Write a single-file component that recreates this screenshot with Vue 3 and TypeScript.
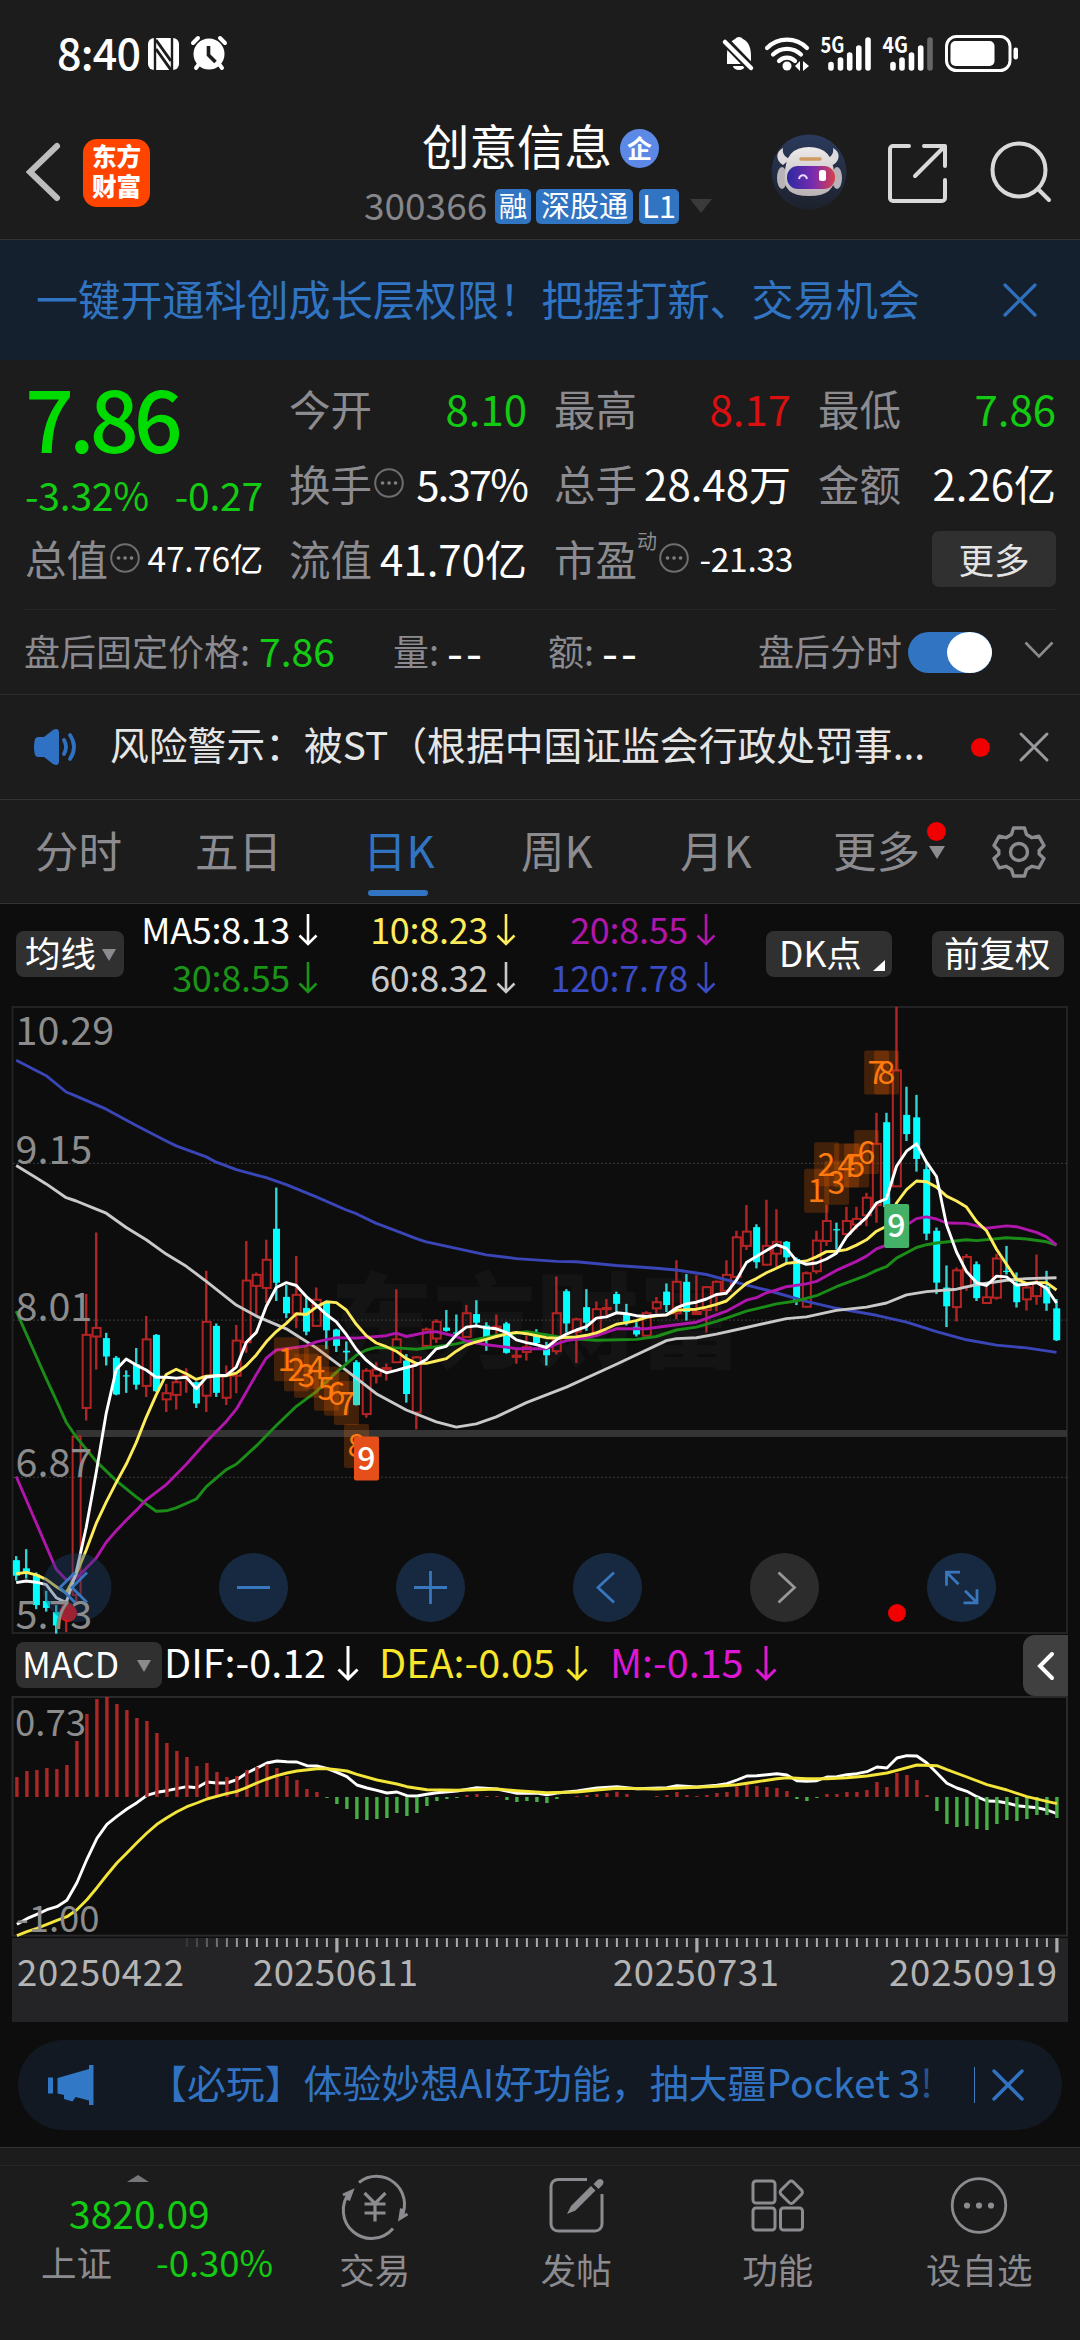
<script setup lang="ts">
type Point = [number, number]
// direction (1 rise, 0 fall), high, body top, body bottom, low
type Candle = [number, number, number, number, number]

const STEP = 10.003
const kx = (i: number): number => 16.2 + i * STEP
const mx = (i: number): number => 16.9 + i * 10
const ky = (v: number): number => v / 2.45
const my = (v: number): number => v / 3

const candles: Candle[] = [
  [0, 1360, 1370, 1408, 1420], [0, 1343, 1390, 1402, 1415], [0, 1400, 1405, 1480, 1490], [0, 1445, 1470, 1487, 1496],
  [0, 1480, 1497, 1530, 1550], [1, 1465, 1478, 1500, 1546], [1, 1067, 1067, 1455, 1480], [1, 718, 818, 997, 1028],
  [1, 567, 801, 822, 903], [0, 813, 826, 871, 893], [0, 870, 874, 964, 966], [0, 905, 917, 920, 960],
  [0, 850, 890, 940, 952], [1, 772, 829, 943, 970], [0, 816, 818, 956, 958], [1, 938, 961, 976, 1007],
  [1, 925, 934, 965, 1001], [1, 900, 918, 922, 960], [0, 932, 934, 986, 997], [1, 661, 786, 967, 1007],
  [0, 790, 796, 960, 970], [1, 893, 917, 972, 990], [1, 794, 832, 918, 961], [1, 588, 685, 836, 862],
  [1, 665, 671, 698, 772], [1, 585, 634, 703, 740], [0, 457, 558, 690, 735], [0, 696, 725, 765, 777],
  [1, 625, 720, 766, 802], [0, 726, 752, 810, 819], [1, 702, 732, 796, 797], [0, 738, 740, 807, 853],
  [0, 803, 805, 845, 860], [0, 834, 857, 861, 885], [0, 880, 885, 990, 991], [1, 900, 906, 1012, 1021],
  [1, 885, 903, 918, 937], [1, 888, 899, 902, 930], [1, 706, 829, 885, 887], [0, 865, 881, 963, 984],
  [1, 870, 873, 1008, 1050], [1, 800, 805, 845, 848], [1, 780, 786, 827, 838], [0, 757, 800, 808, 810],
  [0, 768, 812, 815, 818], [1, 745, 765, 823, 825], [0, 733, 767, 788, 798], [0, 787, 795, 825, 857],
  [1, 768, 798, 801, 820], [0, 786, 790, 862, 864], [1, 850, 869, 872, 889], [1, 820, 848, 860, 881],
  [0, 804, 815, 838, 845], [0, 835, 852, 868, 893], [1, 675, 765, 858, 866], [0, 706, 711, 790, 812],
  [1, 776, 780, 810, 887], [0, 706, 750, 788, 808], [1, 736, 755, 812, 815], [1, 730, 752, 755, 770],
  [0, 712, 718, 742, 765], [0, 742, 767, 786, 795], [0, 787, 798, 817, 822], [1, 760, 765, 820, 822],
  [1, 725, 738, 753, 765], [0, 692, 712, 745, 762], [1, 635, 688, 765, 780], [0, 669, 688, 762, 783],
  [1, 672, 762, 767, 768], [1, 699, 701, 757, 812], [1, 685, 688, 720, 760], [1, 635, 671, 710, 715],
  [1, 563, 579, 676, 680], [1, 500, 565, 600, 610], [0, 547, 554, 640, 655], [1, 487, 600, 646, 648],
  [1, 510, 590, 619, 652], [0, 588, 590, 628, 640], [0, 628, 632, 735, 745], [1, 663, 667, 749, 751],
  [1, 563, 587, 662, 668], [1, 500, 539, 588, 600], [0, 543, 559, 562, 609], [1, 504, 539, 571, 573],
  [1, 504, 534, 548, 560], [1, 470, 482, 525, 552], [1, 274, 350, 500, 543], [0, 274, 297, 505, 510],
  [1, 14, 170, 454, 456], [0, 210, 279, 326, 343], [0, 230, 285, 387, 418], [0, 395, 412, 570, 586],
  [0, 555, 563, 690, 718], [0, 648, 702, 748, 799], [1, 653, 660, 750, 785], [1, 620, 627, 700, 710],
  [0, 638, 645, 728, 735], [1, 700, 726, 740, 742], [1, 620, 631, 727, 732], [0, 600, 661, 664, 670],
  [0, 665, 692, 738, 751], [1, 695, 702, 731, 758], [1, 621, 692, 723, 744], [0, 661, 700, 741, 759],
  [0, 730, 753, 831, 833],
]

const seq = (v: number[]): Point[] => v.map((y, i): Point => [i, y])
const path = (pts: Point[], x: (n: number) => number, y: (n: number) => number): string =>
  pts.map(([a, b]) => `${x(a).toFixed(1)},${y(b).toFixed(1)}`).join(' ')

const ma5 = seq([
  1425, 1421, 1424, 1430, 1462, 1474, 1400, 1290, 1155, 1010, 903, 877, 892, 904, 922, 922, 924, 922, 950, 922, 918, 917,
  897, 836, 812, 748, 702, 690, 697, 724, 745, 768, 786, 817, 853, 880, 900, 911, 905, 898, 892, 878, 852, 846, 818, 799,
  796, 801, 803, 812, 830, 837, 842, 849, 830, 816, 806, 798, 777, 774, 764, 766, 771, 773, 770, 769, 752, 742, 738, 730,
  719, 716, 684, 641, 626, 611, 597, 606, 636, 645, 642, 632, 618, 578, 552, 530, 495, 484, 405, 368, 350, 395, 430, 548,
  615, 663, 690, 697, 674, 676, 696, 694, 690, 704, 740,
])
const ma10 = seq([
  1403, 1400, 1406, 1417, 1435, 1450, 1405, 1345, 1280, 1228, 1180, 1135, 1082, 1020, 965, 915, 902, 913, 927, 919, 918,
  918, 912, 893, 867, 835, 810, 790, 766, 768, 750, 737, 739, 757, 792, 820, 838, 847, 858, 876, 888, 888, 882, 876, 858,
  843, 835, 829, 822, 816, 812, 815, 820, 825, 826, 824, 823, 819, 813, 803, 792, 788, 783, 775, 771, 769, 758, 756, 755,
  750, 743, 735, 713, 692, 680, 666, 655, 643, 640, 637, 627, 614, 613, 609, 598, 585, 564, 552, 495, 462, 441, 443, 456,
  478, 490, 505, 540, 563, 608, 645, 682, 692, 690, 690, 708,
])
const ma20: Point[] = [
  [0, 1165], [4, 1392], [5, 1418], [6, 1415], [7, 1390], [8, 1365], [9, 1326], [10, 1298], [11, 1272], [12, 1248],
  [13, 1222], [15, 1185], [17, 1135], [19, 1080], [21, 1030], [22, 1000], [23, 958], [24, 915], [25, 875], [26, 855],
  [27, 852], [29, 845], [30, 835], [32, 825], [34, 826], [37, 820], [38, 814], [39, 822], [40, 817], [41, 812],
  [42, 810], [44, 822], [45, 833], [47, 842], [49, 848], [50, 852], [53, 852], [54, 840], [55, 832], [57, 825],
  [58, 820], [60, 803], [63, 803], [66, 793], [68, 787], [71, 760], [73, 733], [74, 727], [75, 715], [76, 708],
  [77, 700], [79, 693], [80, 687], [82, 660], [84, 638], [85, 625], [86, 607], [87, 598], [88, 565], [90, 533],
  [91, 529], [92, 534], [93, 544], [95, 545], [97, 557], [99, 551], [100, 553], [102, 567], [103, 578], [104, 598],
]
const ma30: Point[] = [
  [0, 760], [1, 815], [2, 870], [3, 925], [4, 978], [5, 1032], [6, 1068], [8, 1128], [10, 1175], [12, 1215], [14, 1250],
  [15, 1249], [16, 1242], [18, 1220], [19, 1190], [21, 1148], [22, 1135], [24, 1090], [26, 1040], [28, 993], [30, 957],
  [32, 910], [34, 868], [35, 855], [36, 849], [38, 850], [40, 853], [42, 847], [44, 840], [46, 829], [48, 819],
  [50, 814], [51, 810], [52, 814], [54, 822], [56, 828], [58, 831], [62, 829], [64, 822], [66, 806], [68, 799],
  [70, 785], [71, 777], [73, 760], [76, 742], [78, 735], [80, 722], [82, 700], [85, 672], [86, 660], [87, 651],
  [88, 630], [90, 604], [91, 597], [92, 593], [95, 585], [96, 587], [99, 580], [101, 583], [103, 590], [104, 598],
]
const ma60: Point[] = [
  [0, 403], [2, 433], [3, 448], [5, 482], [6, 490], [8, 510], [9, 520], [11, 555], [13, 585], [15, 620], [17, 650],
  [19, 687], [22, 745], [24, 772], [27, 803], [30, 850], [33, 905], [34, 924], [36, 962], [39, 1002], [42, 1031],
  [44, 1044], [46, 1036], [48, 1019], [51, 984], [55, 946], [60, 890], [65, 832], [66, 827], [68, 825], [70, 816],
  [73, 800], [77, 778], [79, 774], [82, 758], [85, 750], [87, 740], [89, 720], [91, 712], [94, 706], [96, 695],
  [99, 684], [101, 680], [104, 678],
]
const ma120: Point[] = [
  [0, 145], [3, 183], [5, 223], [6, 233], [9, 265], [12, 305], [15, 343], [16, 355], [19, 382], [20, 395], [22, 413],
  [25, 433], [27, 450], [30, 480], [33, 512], [34, 521], [36, 545], [38, 563], [40, 582], [41, 590], [44, 606],
  [47, 622], [50, 631], [54, 638], [56, 639], [60, 648], [64, 655], [66, 659], [69, 670], [71, 683], [75, 708],
  [79, 736], [82, 753], [86, 770], [89, 787], [92, 810], [95, 830], [98, 843], [101, 850], [104, 861],
]
const averages: { color: string; pts: string }[] = [
  { color: '#3a46b8', pts: path(ma120, kx, ky) },
  { color: '#c9c9c9', pts: path(ma60, kx, ky) },
  { color: '#1a8c17', pts: path(ma30, kx, ky) },
  { color: '#b015ac', pts: path(ma20, kx, ky) },
  { color: '#ffec5c', pts: path(ma10, kx, ky) },
  { color: '#ffffff', pts: path(ma5, kx, ky) },
]

const marks: { i: number; y: number; t: string }[] = [
  { i: 27, y: 878, t: '1' }, { i: 28, y: 902, t: '2' }, { i: 29, y: 918, t: '3' }, { i: 30, y: 897, t: '4' },
  { i: 31, y: 950, t: '5' }, { i: 32, y: 962, t: '6' }, { i: 33, y: 985, t: '7' }, { i: 34, y: 1090, t: '8' },
  { i: 80, y: 465, t: '1' }, { i: 81, y: 400, t: '2' }, { i: 82, y: 445, t: '3' }, { i: 83, y: 403, t: '4' },
  { i: 84, y: 403, t: '5' }, { i: 85, y: 370, t: '6' }, { i: 86, y: 175, t: '7' }, { i: 87, y: 175, t: '8' },
]
const nines: { i: number; y: number; c: string }[] = [
  { i: 35, y: 1121, c: '#e5501a' },
  { i: 88, y: 551, c: '#43b268' },
]
const priceLabels: { y: number; t: string }[] = [
  { y: 43.7, t: '10.29' }, { y: 163, t: '9.15' }, { y: 320, t: '8.01' }, { y: 476, t: '6.87' }, { y: 628, t: '5.73' },
]

const ZERO = 498
const bars: number[] = [
  438, 420, 417, 411, 414, 402, 330, 249, 204, 198, 219, 237, 261, 270, 306, 336, 360, 378, 405, 396, 423, 438, 435, 417,
  408, 400, 411, 435, 447, 474, 483, 501, 519, 534, 564, 567, 564, 561, 546, 555, 546, 525, 510, 504, 501, 492, 489, 495,
  495, 507, 513, 510, 513, 516, 504, 498, 495, 492, 489, 486, 482, 489, 498, 498, 495, 492, 483, 492, 495, 492, 486, 483,
  467, 460, 465, 468, 471, 480, 504, 510, 501, 489, 489, 483, 483, 477, 453, 468, 426, 432, 447, 492, 540, 579, 588, 585,
  594, 597, 579, 567, 570, 564, 552, 552, 561,
]
const dif: Point[] = [
  [0, 880], [1, 863], [2, 850], [3, 836], [4, 827], [5, 808], [6, 755], [7, 685], [8, 622], [9, 580], [10, 556],
  [11, 534], [12, 515], [13, 493], [14, 484], [15, 479], [16, 473], [17, 467], [18, 470], [19, 453], [20, 456],
  [21, 456], [22, 446], [23, 426], [24, 411], [25, 396], [26, 390], [27, 392], [28, 393], [29, 404], [30, 405],
  [31, 412], [32, 424], [33, 437], [34, 462], [35, 471], [36, 478], [37, 486], [38, 483], [39, 494], [40, 495],
  [41, 490], [42, 485], [44, 480], [46, 470], [48, 474], [50, 487], [52, 486], [53, 491], [54, 486], [56, 480],
  [58, 471], [60, 467], [62, 473], [65, 470], [66, 464], [68, 468], [70, 463], [71, 458], [72, 447], [73, 435],
  [74, 434], [76, 428], [77, 432], [78, 449], [79, 451], [80, 449], [81, 438], [82, 437], [83, 431], [84, 428],
  [85, 422], [86, 408], [87, 411], [88, 381], [89, 374], [90, 375], [91, 396], [92, 426], [93, 457], [94, 471],
  [95, 481], [96, 497], [97, 510], [98, 511], [99, 516], [100, 524], [101, 527], [102, 530], [103, 537], [104, 548],
]
const dea: Point[] = [
  [0, 914], [1, 902], [2, 892], [3, 880], [4, 868], [5, 857], [6, 836], [7, 806], [8, 770], [9, 732], [10, 696],
  [11, 666], [12, 635], [13, 606], [14, 580], [15, 560], [16, 542], [17, 527], [18, 516], [19, 504], [21, 488],
  [22, 481], [23, 469], [24, 456], [25, 444], [26, 434], [27, 426], [28, 420], [30, 413], [31, 413], [32, 416],
  [33, 420], [34, 430], [36, 447], [38, 459], [39, 467], [41, 476], [44, 478], [46, 476], [48, 474], [50, 479],
  [53, 485], [56, 483], [58, 477], [60, 472], [64, 474], [68, 469], [70, 466], [72, 461], [74, 452], [76, 443],
  [77, 440], [79, 443], [81, 443], [83, 440], [85, 435], [87, 426], [88, 418], [90, 402], [92, 404], [93, 416],
  [95, 438], [97, 461], [99, 477], [101, 497], [103, 511], [104, 518],
]
const difLine = path(dif, mx, my)
const deaLine = path(dea, mx, my)

const ticks = Array.from({ length: 88 }, (_, n) => {
  const i = n + 17
  const major = i === 32 || i === 68 || i === 104
  return { x: mx(i), major, o: Math.min(1, (i - 16) / 7) }
})

const maCells: { t: string; c: string }[] = [
  { t: 'MA5:8.13', c: '#ffffff' }, { t: '10:8.23', c: '#ffec5c' }, { t: '20:8.55', c: '#b015ac' },
  { t: '30:8.55', c: '#1a9417' }, { t: '60:8.32', c: '#c9c9c9' }, { t: '120:7.78', c: '#3a4cc4' },
]
const tabs: { t: string; cls: string }[] = [
  { t: '分时', cls: 't1' }, { t: '五日', cls: 't2' }, { t: '日K', cls: 't3 on' }, { t: '周K', cls: 't4' }, { t: '月K', cls: 't5' },
]
</script>

<template>
  <div class="screen">
    <header class="top">
      <div class="status">
        <span class="clock">8:40</span>
        <svg class="st-left" width="84" height="40" viewBox="146 34 84 40">
          <rect x="148" y="38" width="31" height="32" rx="6" fill="#fff" />
          <path d="M155 38v32M172 38v32" stroke="#1c1c1c" stroke-width="2.4" />
          <path d="M156 40l15 21M156 49l15 21" stroke="#1c1c1c" stroke-width="3" fill="none" />
          <circle cx="209" cy="54" r="15.5" fill="#fff" />
          <path d="M208.500 46v9l7 7" stroke="#1c1c1c" stroke-width="3.600" fill="none" />
          <path d="M193 43l5-5M225 43l-5-5M199 64l-3 4M219 64l3 4" stroke="#fff" stroke-width="4" stroke-linecap="round" />
        </svg>
        <svg class="st-right" width="300" height="44" viewBox="720 32 300 44">
          <path d="M727 64V56c0-9 2-14 8-17a5 5 0 0 1 8 0c6 3 8 9 8 17v8zM733 66h12a6 4 0 0 1-12 0z" fill="#fff" />
          <path d="M721 37l33 34" stroke="#1c1c1c" stroke-width="9" />
          <path d="M725 42l26 26" stroke="#fff" stroke-width="4.500" stroke-linecap="round" />
          <path d="M767 48a28 28 0 0 1 40 0M773 54.500a20 20 0 0 1 28 0M779 61a11 11 0 0 1 16 0" stroke="#fff" stroke-width="4.200" fill="none" stroke-linecap="round" />
          <circle cx="787" cy="66" r="4.500" fill="#fff" />
          <path d="M800 61v10l-5-5zM803 61v10l6-5z" fill="#fff" />
          <text x="820.500" y="53" class="net" textLength="24" lengthAdjust="spacingAndGlyphs">5G</text>
          <text x="882.500" y="53" class="net" textLength="25.500" lengthAdjust="spacingAndGlyphs">4G</text>
          <g stroke="#fff" stroke-width="5.600" stroke-linecap="round">
            <path d="M831 64.500V68M840.500 60v8M849.700 55v13M858.800 48v20M868 40v28" />
            <path d="M893 64.500V68M902 60v8M911.500 55v13M920.700 48v20" />
            <path d="M930 40v28" stroke="#666" />
          </g>
          <rect x="946.500" y="36.500" width="63.500" height="34" rx="10" fill="none" stroke="#fff" stroke-width="3" />
          <rect x="950.500" y="41" width="44" height="25" rx="5" fill="#fff" />
          <rect x="1013.500" y="47.500" width="4.500" height="12" rx="2.200" fill="#fff" />
        </svg>
      </div>
      <div class="titlebar">
        <svg class="back" width="36" height="60" viewBox="0 0 36 60"><path d="M32 4L5 30l27 26" fill="none" stroke="#bdbdbd" stroke-width="6" stroke-linecap="round" /></svg>
        <div class="logo"><span>东方</span><span>财富</span></div>
        <div class="name">
          <div class="name-row"><span>创意信息</span><i class="qi">企</i></div>
          <div class="code-row">
            <span class="code">300366</span><b class="tag a">融</b><b class="tag b">深股通</b><b class="tag c">L1</b>
            <svg width="22" height="14" viewBox="0 0 22 14"><path d="M0 0h22L11 14z" fill="#3a3a3a" /></svg>
          </div>
        </div>
        <svg class="robot" width="76" height="76" viewBox="0 0 76 76">
          <defs>
            <linearGradient id="sky" x1="0" y1="0" x2="0" y2="1"><stop offset="0" stop-color="#2b3a5c" /><stop offset="1" stop-color="#1d212c" /></linearGradient>
            <linearGradient id="head" x1="0" y1="0" x2="0" y2="1"><stop offset="0" stop-color="#eeeaea" /><stop offset="1" stop-color="#b9b2b5" /></linearGradient>
            <linearGradient id="visor" x1="0" y1="0" x2="1" y2="0"><stop offset="0" stop-color="#2b2aa0" /><stop offset=".55" stop-color="#7a2bb0" /><stop offset="1" stop-color="#d9404a" /></linearGradient>
          </defs>
          <circle cx="38" cy="38" r="37.500" fill="url(#sky)" />
          <path d="M12 14C4 18 5 27 12 31l7-6c-5-2-8-5-7-11zM62 14c8 4 7 13 0 17l-7-6c5-2 8-5 7-11z" fill="#dedadd" />
          <ellipse cx="11" cy="44" rx="5" ry="11" fill="#b8b3b8" /><ellipse cx="66" cy="44" rx="5" ry="11" fill="#b8b3b8" />
          <path d="M14 40Q14 13 38 13T63 40Q66 62 38 62T14 40z" fill="url(#head)" />
          <path d="M30 25h19" stroke="#d19a63" stroke-width="3.500" stroke-linecap="round" />
          <rect x="16" y="32" width="48" height="23" rx="11" fill="url(#visor)" />
          <path d="M28 45c1-5 7-5 8 0" stroke="#e8d8ff" stroke-width="2" fill="none" />
          <rect x="48" y="36" width="7" height="11" rx="2.500" fill="#fff" />
        </svg>
        <svg class="share" width="62" height="62" viewBox="0 0 62 62" fill="none" stroke="#d9d9d9" stroke-width="4" stroke-linecap="round" stroke-linejoin="round">
          <path d="M22 4H6a3 3 0 0 0-3 3v49a3 3 0 0 0 3 3h49a3 3 0 0 0 3-3V38M37 4h21v20M57 5L28 34" />
        </svg>
        <svg class="search" width="62" height="62" viewBox="0 0 62 62" fill="none" stroke="#d9d9d9" stroke-width="4" stroke-linecap="round">
          <circle cx="29" cy="29" r="26.500" /><path d="M48 48l11 11" />
        </svg>
      </div>
    </header>

    <div class="banner">
      <span>一键开通科创成长层权限！把握打新、交易机会</span>
      <svg width="34" height="34" viewBox="0 0 34 34"><path d="M2 2l30 30M32 2L2 32" stroke="#2f70bd" stroke-width="3.200" stroke-linecap="round" /></svg>
    </div>

    <section class="quote">
      <div class="main">
        <div class="price">7.86</div>
        <div class="change"><span>-3.32%</span><span>-0.27</span></div>
        <div class="cell total">
          <label>总值</label>
          <svg class="dots" width="30" height="30" viewBox="0 0 30 30"><circle cx="15" cy="15" r="13.800" /><path d="M8.500 15h.1M15 15h.1M21.500 15h.1" /></svg>
          <em class="sm">47.76亿</em>
        </div>
      </div>
      <div class="grid">
        <div class="cell"><label>今开</label><em class="g sp">8.10</em></div>
        <div class="cell"><label>最高</label><em class="r sp">8.17</em></div>
        <div class="cell"><label>最低</label><em class="g sp">7.86</em></div>
        <div class="cell">
          <label>换手</label>
          <svg class="dots" width="30" height="30" viewBox="0 0 30 30"><circle cx="15" cy="15" r="13.800" /><path d="M8.500 15h.1M15 15h.1M21.500 15h.1" /></svg>
          <em class="tight">5.37%</em>
        </div>
        <div class="cell"><label>总手</label><em>28.48万</em></div>
        <div class="cell"><label>金额</label><em>2.26亿</em></div>
        <div class="cell"><label>流值</label><em>41.70亿</em></div>
        <div class="cell">
          <label>市盈</label><sup>动</sup>
          <svg class="dots" width="30" height="30" viewBox="0 0 30 30"><circle cx="15" cy="15" r="13.800" /><path d="M8.500 15h.1M15 15h.1M21.500 15h.1" /></svg>
          <em class="sm pe">-21.33</em>
        </div>
        <div class="cell"><button class="more">更多</button></div>
      </div>
    </section>

    <div class="after">
      <span class="l1">盘后固定价格:</span><span class="v1">7.86</span>
      <span class="l2">量:</span><span class="dash">--</span>
      <span class="l3">额:</span><span class="dash">--</span>
      <span class="l4">盘后分时</span>
      <span class="switch"><i></i></span>
      <svg width="30" height="18" viewBox="0 0 30 18"><path d="M1.500 1.500L15 15.500 28.500 1.500" fill="none" stroke="#8b8b90" stroke-width="2.600" /></svg>
    </div>

    <div class="risk">
      <svg class="speaker" width="46" height="38" viewBox="0 0 46 38">
        <path d="M2 11q-2 8 0 16 1 2 3 2h6l9 7q6 3 6-3V5q0-6-6-3l-9 7H5q-2 0-3 2z" fill="#2f72c4" />
        <path d="M31 12q4 7 0 14M37 7q8 12 0 24" fill="none" stroke="#2f72c4" stroke-width="3.800" stroke-linecap="round" />
      </svg>
      <span class="risk-text">风险警示：被ST（根据中国证监会行政处罚事...</span>
      <i class="reddot"></i>
      <svg class="x" width="30" height="30" viewBox="0 0 30 30"><path d="M2 2l26 26M28 2L2 28" stroke="#9a9a9e" stroke-width="3" stroke-linecap="round" /></svg>
    </div>

    <nav class="tabs">
      <span v-for="t in tabs" :key="t.t" class="tab" :class="t.cls">{{ t.t }}</span>
      <span class="tab t6">更多<i class="reddot"></i><svg width="16" height="13" viewBox="0 0 16 13"><path d="M0 0h16L8 13z" fill="#8b8b90" /></svg></span>
      <svg class="gear" width="54" height="54" viewBox="0 0 54 54" fill="none" stroke="#8b8b90" stroke-width="3.400" stroke-linejoin="round">
        <path d="M21.500 3h11l2 6.500 5.500 3.200 6.800-1.500 5.200 9.300-4.800 5V29l4.800 4.500-5.200 9.300-6.800-1.500-5.500 3.200-2 6.500h-11l-2-6.500-5.500-3.200-6.800 1.500L2 33.500 6.800 29v-3.500L2 20.500l5.200-9.300 6.800 1.500 5.500-3.200z" /><circle cx="27" cy="27" r="8.500" />
      </svg>
    </nav>

    <section class="ma-row">
      <button class="chip ma-btn">均线<svg width="14" height="12" viewBox="0 0 14 12"><path d="M0 0h14L7 12z" fill="#8b8b90" /></svg></button>
      <div class="ma-grid">
        <div v-for="m in maCells" :key="m.t" class="ma" :style="{ color: m.c }">
          <span>{{ m.t }}</span>
          <svg width="20" height="32" viewBox="0 0 20 32"><path d="M10 0v30M1.500 21.500L10 30l8.500-8.500" fill="none" stroke="currentColor" stroke-width="2.600" /></svg>
        </div>
      </div>
      <button class="chip dk">DK点<svg width="12" height="11" viewBox="0 0 12 11"><path d="M12 0v11H0z" fill="#fff" /></svg></button>
      <button class="chip fq">前复权</button>
    </section>

    <svg class="kline" width="1080" height="628" viewBox="0 5 1080 628">
      <text x="330" y="359" class="watermark" textLength="412">东方财富</text>
      <rect x="12.500" y="6" width="1054.500" height="626" fill="none" stroke="#232325" stroke-width="2" />
      <path v-for="y in [398, 782, 1167]" :key="y" :d="`M13 ${ky(y)}H1067`" stroke="#333" stroke-width="1.200" stroke-dasharray="2 2" />
      <rect x="76" y="429" width="991" height="7" fill="#343434" />
      <g v-for="(c, i) in candles" :key="i">
        <template v-if="c[0]">
          <path :d="`M${kx(i)} ${ky(c[1])}V${ky(c[2])}M${kx(i)} ${ky(c[3])}V${ky(c[4])}`" stroke="#b52424" stroke-width="2.400" />
          <rect :x="kx(i) - 3.600" :y="ky(c[2])" width="8" :height="ky(c[3] - c[2])" fill="none" stroke="#b52424" stroke-width="2" />
        </template>
        <template v-else>
          <path :d="`M${kx(i)} ${ky(c[1])}V${ky(c[4])}`" stroke="#35d3d3" stroke-width="2.400" />
          <rect :x="kx(i) - 3.300" :y="ky(c[2])" width="7" :height="ky(c[3] - c[2])" fill="#00ffff" />
        </template>
      </g>
      <polyline v-for="a in averages" :key="a.color" :points="a.pts" fill="none" :stroke="a.color" stroke-width="2.900" stroke-linejoin="round" />
      <g v-for="(m, n) in marks" :key="'m' + n">
        <rect :x="kx(m.i) - 12.300" :y="ky(m.y) - 22" width="25" height="44" rx="2" fill="#ff6a00" fill-opacity=".22" />
        <text :x="kx(m.i)" :y="ky(m.y) + 11.500" class="mark">{{ m.t }}</text>
      </g>
      <g v-for="n in nines" :key="n.c">
        <rect :x="kx(n.i) - 12.300" :y="ky(n.y) - 22" width="25" height="44" rx="2" :fill="n.c" />
        <text :x="kx(n.i)" :y="ky(n.y) + 11.500" class="mark nine">9</text>
      </g>
      <circle cx="68" cy="612" r="9" fill="#f01010" />
      <circle cx="897" cy="612" r="9" fill="#f00000" />
      <g fill="#20426b" fill-opacity=".55">
        <circle cx="77" cy="586.500" r="34.500" fill-opacity=".4" /><circle cx="253.500" cy="586.500" r="34.500" /><circle cx="430.500" cy="586.500" r="34.500" />
        <circle cx="607.500" cy="586.500" r="34.500" /><circle cx="961.500" cy="586.500" r="34.500" />
      </g>
      <text v-for="p in priceLabels" :key="p.t" x="15.500" :y="p.y" class="plabel">{{ p.t }}</text>
      <circle cx="784.500" cy="586.500" r="34.500" fill="#2c2c2c" />
      <g fill="none" stroke="#3876bd" stroke-width="2.800">
        <path d="M75 571.500L60 586.500l15 15M87 571.500L72 586.500l15 15" />
        <path d="M237 586.500h33M414 586.500h33M430.500 570v33" />
        <path d="M614 571.500L598 586.500l16 15" />
        <path d="M960 571.200h-13.500v13.500M947 571.700l11.500 11.500M963.500 601.800H977v-13.500M976.500 601.300L965 589.800" />
        <path d="M778.500 571.500l16 15-16 15" stroke="#98989c" />
      </g>
    </svg>

    <section class="macd-head">
      <button class="chip macd-btn">MACD<svg width="14" height="12" viewBox="0 0 14 12"><path d="M0 0h14L7 12z" fill="#8b8b90" /></svg></button>
      <div class="mv m1"><span>DIF:-0.12</span><svg width="22" height="35" viewBox="0 0 22 35"><path d="M11 0v33M1.500 23.500L11 33l9.500-9.500" fill="none" stroke="currentColor" stroke-width="3" /></svg></div>
      <div class="mv m2"><span>DEA:-0.05</span><svg width="22" height="35" viewBox="0 0 22 35"><path d="M11 0v33M1.500 23.500L11 33l9.500-9.500" fill="none" stroke="currentColor" stroke-width="3" /></svg></div>
      <div class="mv m3"><span>M:-0.15</span><svg width="22" height="35" viewBox="0 0 22 35"><path d="M11 0v33M1.500 23.500L11 33l9.500-9.500" fill="none" stroke="currentColor" stroke-width="3" /></svg></div>
      <div class="fold"><svg width="18" height="30" viewBox="0 0 18 30"><path d="M15 3L3 15l12 12" fill="none" stroke="#fff" stroke-width="4" stroke-linecap="round" /></svg></div>
    </section>

    <svg class="macd" width="1080" height="327" viewBox="0 65 1080 327">
      <rect x="12.500" y="66" width="1054.500" height="238.600" fill="none" stroke="#2a2a2c" stroke-width="2" />
      <polyline :points="difLine" fill="none" stroke="#fff" stroke-width="2.900" stroke-linejoin="round" />
      <g v-for="(b, i) in bars" :key="i">
        <rect :x="mx(i) - 1.700" :y="my(Math.min(b, ZERO))" width="3.400" :height="my(Math.abs(b - ZERO))" :fill="b < ZERO ? '#ad2626' : '#46b044'" />
      </g>
      <polyline :points="deaLine" fill="none" stroke="#f3e53a" stroke-width="2.900" stroke-linejoin="round" />
      <text x="15" y="105" class="mlabel">0.73</text>
      <text x="16" y="301" class="mlabel">-1.00</text>
      <rect x="12" y="307" width="1056" height="84" fill="#242426" />
      <path v-for="t in ticks" :key="t.x" :d="`M${t.x} 307V${t.major ? 321.500 : 316}`" stroke="#aaa" :stroke-width="t.major ? 3.200 : 2" :opacity="t.o" />
      <text x="17" y="355" class="date" textLength="167">20250422</text>
      <text x="253" y="355" class="date" textLength="165">20250611</text>
      <text x="613" y="355" class="date" textLength="166">20250731</text>
      <text x="889" y="355" class="date" textLength="168">20250919</text>
    </svg>

    <div class="promo">
      <svg class="horn" width="46" height="40" viewBox="0 0 46 40"><path d="M0 12.500h5v16H0zM9.500 13L41 4V0h4.500v40H41v-4.500L27.500 32l-3 4.500-8.500-2.500v-4l-6.500-1.500z" fill="#3178c6" /></svg>
      <span class="promo-text">【必玩】体验妙想AI好功能，抽大疆Pocket 3<b>!</b></span>
      <i class="bar"></i>
      <svg width="32" height="32" viewBox="0 0 32 32"><path d="M2 2l28 28M30 2L2 30" stroke="#3173c2" stroke-width="3.400" stroke-linecap="round" /></svg>
    </div>

    <footer class="nav">
      <div class="strip"></div>
      <div class="items">
        <div class="index">
          <svg width="22" height="7" viewBox="0 0 22 7"><path d="M11 0l11 7H0z" fill="#77777b" /></svg>
          <div class="pt">3820.09</div>
          <div class="chg"><span>上证</span><em>-0.30%</em></div>
        </div>
        <div class="item">
          <svg width="68" height="60" viewBox="0 0 68 60" fill="none" stroke="#8b8b90" stroke-width="3">
            <path d="M18 7.500A28 28 0 0 1 60.500 42M52 53.500A28 28 0 0 1 9 17M2 20l9-4-3.500 9.500M66.500 39l-7.500 4.500 1.500-10" />
            <path d="M23.500 18L34 28.500 44.500 18M23.500 29h21M23.500 38h21M34 28v18.500" stroke-width="3.200" />
          </svg>
          <span>交易</span>
        </div>
        <div class="item">
          <svg width="60" height="60" viewBox="0 0 60 60" fill="none" stroke="#8b8b90" stroke-width="3">
            <path d="M41 4.500H12a7 7 0 0 0-7 7V49a7 7 0 0 0 7 7h37a7 7 0 0 0 7-7V19" />
            <path d="M21 39l4-8 20-20 4.500 4.500-20 20zM47.500 9l4-4q3-2 5 0t0 5l-4 4z" fill="#8b8b90" stroke="none" />
          </svg>
          <span>发帖</span>
        </div>
        <div class="item">
          <svg width="60" height="60" viewBox="0 0 60 60" fill="none" stroke="#8b8b90" stroke-width="3">
            <rect x="5" y="6" width="22" height="22" rx="3" /><rect x="5" y="33" width="22" height="22" rx="3" /><rect x="32.500" y="33" width="22" height="22" rx="3" />
            <rect x="34.500" y="8.500" width="17.500" height="17.500" rx="3" transform="rotate(45 43.250 17.250)" />
          </svg>
          <span>功能</span>
        </div>
        <div class="item">
          <svg width="60" height="60" viewBox="0 0 60 60"><circle cx="30" cy="30.500" r="26.800" fill="none" stroke="#8b8b90" stroke-width="2.800" /><g fill="#8b8b90"><circle cx="18" cy="30.500" r="3.100" /><circle cx="30" cy="30.500" r="3.100" /><circle cx="42" cy="30.500" r="3.100" /></g></svg>
          <span>设自选</span>
        </div>
      </div>
    </footer>
  </div>
</template>

<style>
body {
  background: #0d0d0d;
}
</style>

<style scoped>
.screen {
  width: 1080px;
  height: 2340px;
  overflow: hidden;
  display: flex;
  flex-direction: column;
  background: #0d0d0d;
  color: #fff;
  font-family: "Noto Sans CJK SC", "Noto Sans", sans-serif;
}
.screen * {
  box-sizing: border-box;
  white-space: nowrap;
}
.screen > * {
  flex-shrink: 0;
}
svg {
  display: block;
  flex-shrink: 0;
  overflow: visible;
}
i, em, b {
  font-style: normal;
}
b {
  font-weight: 400;
}
button {
  border: 0;
  padding: 0;
  color: inherit;
  font: inherit;
}
.top {
  height: 240px;
  background: #1c1c1c;
  border-bottom: 1px solid #333335;
}
.status {
  height: 108px;
  display: flex;
  align-items: center;
}
.clock {
  width: 88px;
  margin-left: 57px;
  font-size: 43px;
  line-height: 60px;
  font-weight: 500;
  letter-spacing: -0.8px;
  margin-top: -6px;
}
.st-left {
  margin-left: 1px;
}
.st-right {
  margin-left: 490px;
}
.net {
  font-size: 22px;
  font-weight: 700;
  fill: #fff;
}
.titlebar {
  height: 131px;
  display: flex;
}
.back {
  margin: 34px 0 0 25px;
}
.logo {
  width: 67px;
  height: 68px;
  margin: 31px 0 0 22px;
  border-radius: 14px;
  background: #ff4400;
  padding-top: 2px;
  display: flex;
  flex-direction: column;
  align-items: center;
  font-size: 24.5px;
  font-weight: 900;
  line-height: 29.500px;
}
.name {
  width: 400px;
  margin-left: 213px;
}
.name-row {
  display: flex;
  margin: 4px 0 0 59px;
  font-size: 47.500px;
  line-height: 66px;
}
.qi {
  width: 39px;
  height: 39px;
  margin: 17px 0 0 8px;
  border-radius: 50%;
  background: #5d89e6;
  font-size: 25px;
  line-height: 37px;
  font-weight: 700;
  text-align: center;
}
.code-row {
  display: flex;
  align-items: center;
  margin-top: 10px;
  height: 36px;
}
.code {
  width: 131px;
  margin: -5px 0 0 1px;
  font-size: 37px;
  line-height: 36px;
  color: #86868b;
}
.tag {
  height: 35px;
  border-radius: 5px;
  background: #3074c2;
  font-size: 28.500px;
  line-height: 31px;
  text-align: center;
}
.tag.a { width: 36px; }
.tag.b { width: 97px; margin-left: 5px; font-size: 29px; }
.tag.c { width: 40px; margin: 0 11px 0 6px; font-size: 31px; }
.robot {
  margin: 26px 0 0 8px;
}
.share {
  margin: 34px 0 0 40px;
}
.search {
  margin: 33px 0 0 41px;
}
.banner {
  height: 120px;
  padding: 0 43px 0 36px;
  display: flex;
  justify-content: space-between;
  align-items: center;
  background: #14202e;
  color: #3174c2;
  font-size: 42.100px;
}
.banner span {
  margin-top: -6px;
}
.quote {
  height: 250px;
  padding: 10px 24px 0 25px;
  background: #1c1c1c;
  display: flex;
  position: relative;
}
.quote::after {
  content: "";
  position: absolute;
  left: 24px;
  right: 24px;
  bottom: 0;
  height: 1px;
  background: #28282a;
}
.main {
  width: 238px;
  margin-right: 26px;
}
.price {
  height: 91px;
  line-height: 91px;
  font-size: 86px;
  font-weight: 500;
  letter-spacing: -5px;
  color: #00dc00;
}
.change {
  height: 67px;
  line-height: 67px;
  display: flex;
  justify-content: space-between;
  font-size: 39px;
  letter-spacing: -0.200px;
  color: #12cb12;
}
.total {
  height: 59px;
}
.grid {
  display: grid;
  grid-template-columns: 238px 237px 238px;
  grid-auto-rows: 75px;
  column-gap: 27px;
}
.cell {
  display: flex;
  align-items: center;
  font-size: 42px;
  line-height: 58px;
}
.cell label {
  color: #8b8b90;
  font-size: 41.500px;
}
.cell em {
  margin-left: auto;
}
.cell .sm {
  font-size: 33.500px;
  letter-spacing: -0.300px;
}
.cell .pe {
  margin-right: -2px;
}
.cell .tight {
  letter-spacing: -1.900px;
}
.cell .g { color: #12cb12; }
.cell .r { color: #d81010; }
.dots {
  margin-left: 2px;
  fill: none;
  stroke: #6e6e72;
  stroke-width: 2;
}
.dots path {
  stroke: #808084;
  stroke-width: 3.600;
  stroke-linecap: round;
}
.cell sup {
  font-size: 20px;
  line-height: 24px;
  color: #8b8b90;
  margin: 0 0 34px 0;
  align-self: center;
}
.more {
  width: 124px;
  height: 56px;
  margin: 2px 0 0 auto;
  border-radius: 7px;
  background: #303030;
  font-size: 35.500px;
  line-height: 52px;
  color: #e4e4e4;
}
.after {
  height: 85px;
  padding: 0 28px 5px 24px;
  display: flex;
  align-items: center;
  background: #1c1c1c;
  border-bottom: 1px solid #2a2a2c;
  font-size: 36px;
  color: #8b8b90;
}
.after span {
  flex-shrink: 0;
}
.l1 { width: 235px; }
.v1 { width: 134px; font-size: 39px; color: #12cb12; }
.l2 { width: 54px; }
.dash {
  width: 101px;
  color: #fff;
  font-size: 46px;
  line-height: 50px;
  letter-spacing: 3px;
}
.l3 { width: 54px; }
.l4 { width: 150px; margin-left: 55px; }
.after .switch {
  width: 84px;
  height: 41px;
  margin: 5px 32px 0 0;
  border-radius: 21px;
  background: #3074c2;
  display: flex;
  justify-content: flex-end;
}
.switch i {
  width: 45px;
  height: 41px;
  border-radius: 50%;
  background: #fff;
}
.risk {
  height: 105px;
  padding-left: 33px;
  display: flex;
  align-items: center;
  background: #1c1c1c;
  border-bottom: 1px solid #333335;
  color: #e6e6e6;
}
.risk-text {
  width: 861px;
  margin: -8px 0 0 31px;
  font-size: 38.800px;
}
.reddot {
  width: 19px;
  height: 19px;
  border-radius: 50%;
  background: #f00000;
}
.risk .x {
  margin-left: 29px;
}
.tabs {
  height: 104px;
  display: flex;
  align-items: center;
  background: #1c1c1c;
  border-bottom: 1px solid #333335;
  color: #8b8b90;
}
.tab {
  position: relative;
  height: 103px;
  font-size: 43.500px;
  line-height: 99px;
}
.t1 { margin-left: 35px; width: 160px; }
.t2 { width: 168px; }
.t3 { width: 158px; }
.t4 { width: 159px; }
.t5 { width: 153px; }
.t6 { width: 159px; }
.on { color: #3174c2; }
.on::after {
  content: "";
  position: absolute;
  left: 5px;
  bottom: 7px;
  width: 60px;
  height: 6px;
  border-radius: 3px;
  background: #3174c2;
}
.t6 .reddot {
  position: absolute;
  left: 94px;
  top: 22px;
}
.t6 svg {
  position: absolute;
  left: 96px;
  top: 46px;
}
.ma-row {
  height: 102px;
  padding-left: 16px;
  display: flex;
}
.chip {
  height: 46px;
  border-radius: 8px;
  background: #303030;
  display: flex;
  align-items: center;
  font-size: 35.500px;
  line-height: 42px;
  padding-bottom: 4px;
}
.ma-row .chip {
  margin-top: 27px;
}
.ma-btn {
  width: 108px;
  padding-left: 9px;
}
.ma-btn svg {
  margin: 5px 0 0 6px;
}
.ma-grid {
  width: 600px;
  display: grid;
  grid-template-columns: 194px 198px 200px;
  grid-auto-rows: 48px;
}
.ma {
  display: flex;
  justify-content: flex-end;
  font-size: 36px;
  line-height: 48px;
  letter-spacing: -0.300px;
}
.ma svg {
  margin: 10px 0 0 8px;
}
.dk {
  width: 126px;
  margin-left: 42px;
  padding-left: 13px;
}
.dk svg {
  margin: 27px 0 0 11px;
}
.fq {
  width: 132px;
  margin-left: 40px;
  padding-left: 12px;
}
.watermark {
  font-size: 103px;
  font-weight: 900;
  fill: #141414;
}
.mark {
  font-size: 32px;
  text-anchor: middle;
  fill: #ff7a0f;
}
.nine {
  fill: #fff;
  font-weight: 500;
}
.plabel {
  font-size: 39.500px;
  fill: #8c8c8c;
}
.macd-head {
  height: 62px;
  padding: 0 12px 0 16px;
  display: flex;
}
.macd-btn {
  width: 146px;
  margin-top: 8px;
  padding-left: 6px;
  font-size: 35.500px;
}
.macd-btn svg {
  margin: 5px 0 0 18px;
}
.mv {
  display: flex;
  font-size: 39.500px;
  line-height: 54px;
}
.mv svg {
  margin: 12px 0 0 11px;
}
.m1 { margin-left: 2px; width: 215px; }
.m2 { width: 231px; color: #f7e62c; }
.m3 { width: 200px; color: #dd18d4; }
.fold {
  width: 45px;
  height: 61px;
  margin: 1px 0 0 auto;
  border-radius: 12px 0 0 12px;
  background: #404040;
  display: flex;
  align-items: center;
  padding-left: 14px;
}
.mlabel {
  font-size: 36.500px;
  fill: #8c8c8c;
}
.date {
  font-size: 36.500px;
  fill: #b4b4b4;
}
.promo {
  height: 90px;
  margin: 17px 18px;
  padding: 0 38px 0 30px;
  border-radius: 45px;
  background: #121922;
  display: flex;
  align-items: center;
  color: #3173c2;
}
.promo-text {
  width: 827px;
  margin: -8px 0 0 54px;
  font-size: 38.900px;
}
.promo-text b {
  opacity: .65;
}
.bar {
  width: 1px;
  height: 36px;
  margin-right: 17px;
  background: #3f7cbc;
}
.nav {
  height: 194px;
  background: #1c1c1c;
  border-top: 1px solid #333335;
}
.strip {
  height: 18px;
  border-bottom: 1px solid #262628;
}
.items {
  display: flex;
  color: #8b8b90;
}
.index {
  width: 274px;
  padding-top: 9px;
}
.index svg {
  margin-left: 127px;
}
.pt {
  margin: 5px 0 0 69px;
  font-size: 39px;
  line-height: 50px;
  color: #12cb12;
}
.chg {
  display: flex;
  margin: 0 0 0 41px;
  font-size: 35.500px;
  line-height: 50px;
}
.chg em {
  margin-left: 44px;
  font-size: 36.500px;
  color: #12cb12;
}
.item {
  width: 201.500px;
  padding-top: 9px;
  display: flex;
  flex-direction: column;
  align-items: center;
}
.item span {
  margin-top: 9px;
  font-size: 35.500px;
  line-height: 50px;
}
</style>
